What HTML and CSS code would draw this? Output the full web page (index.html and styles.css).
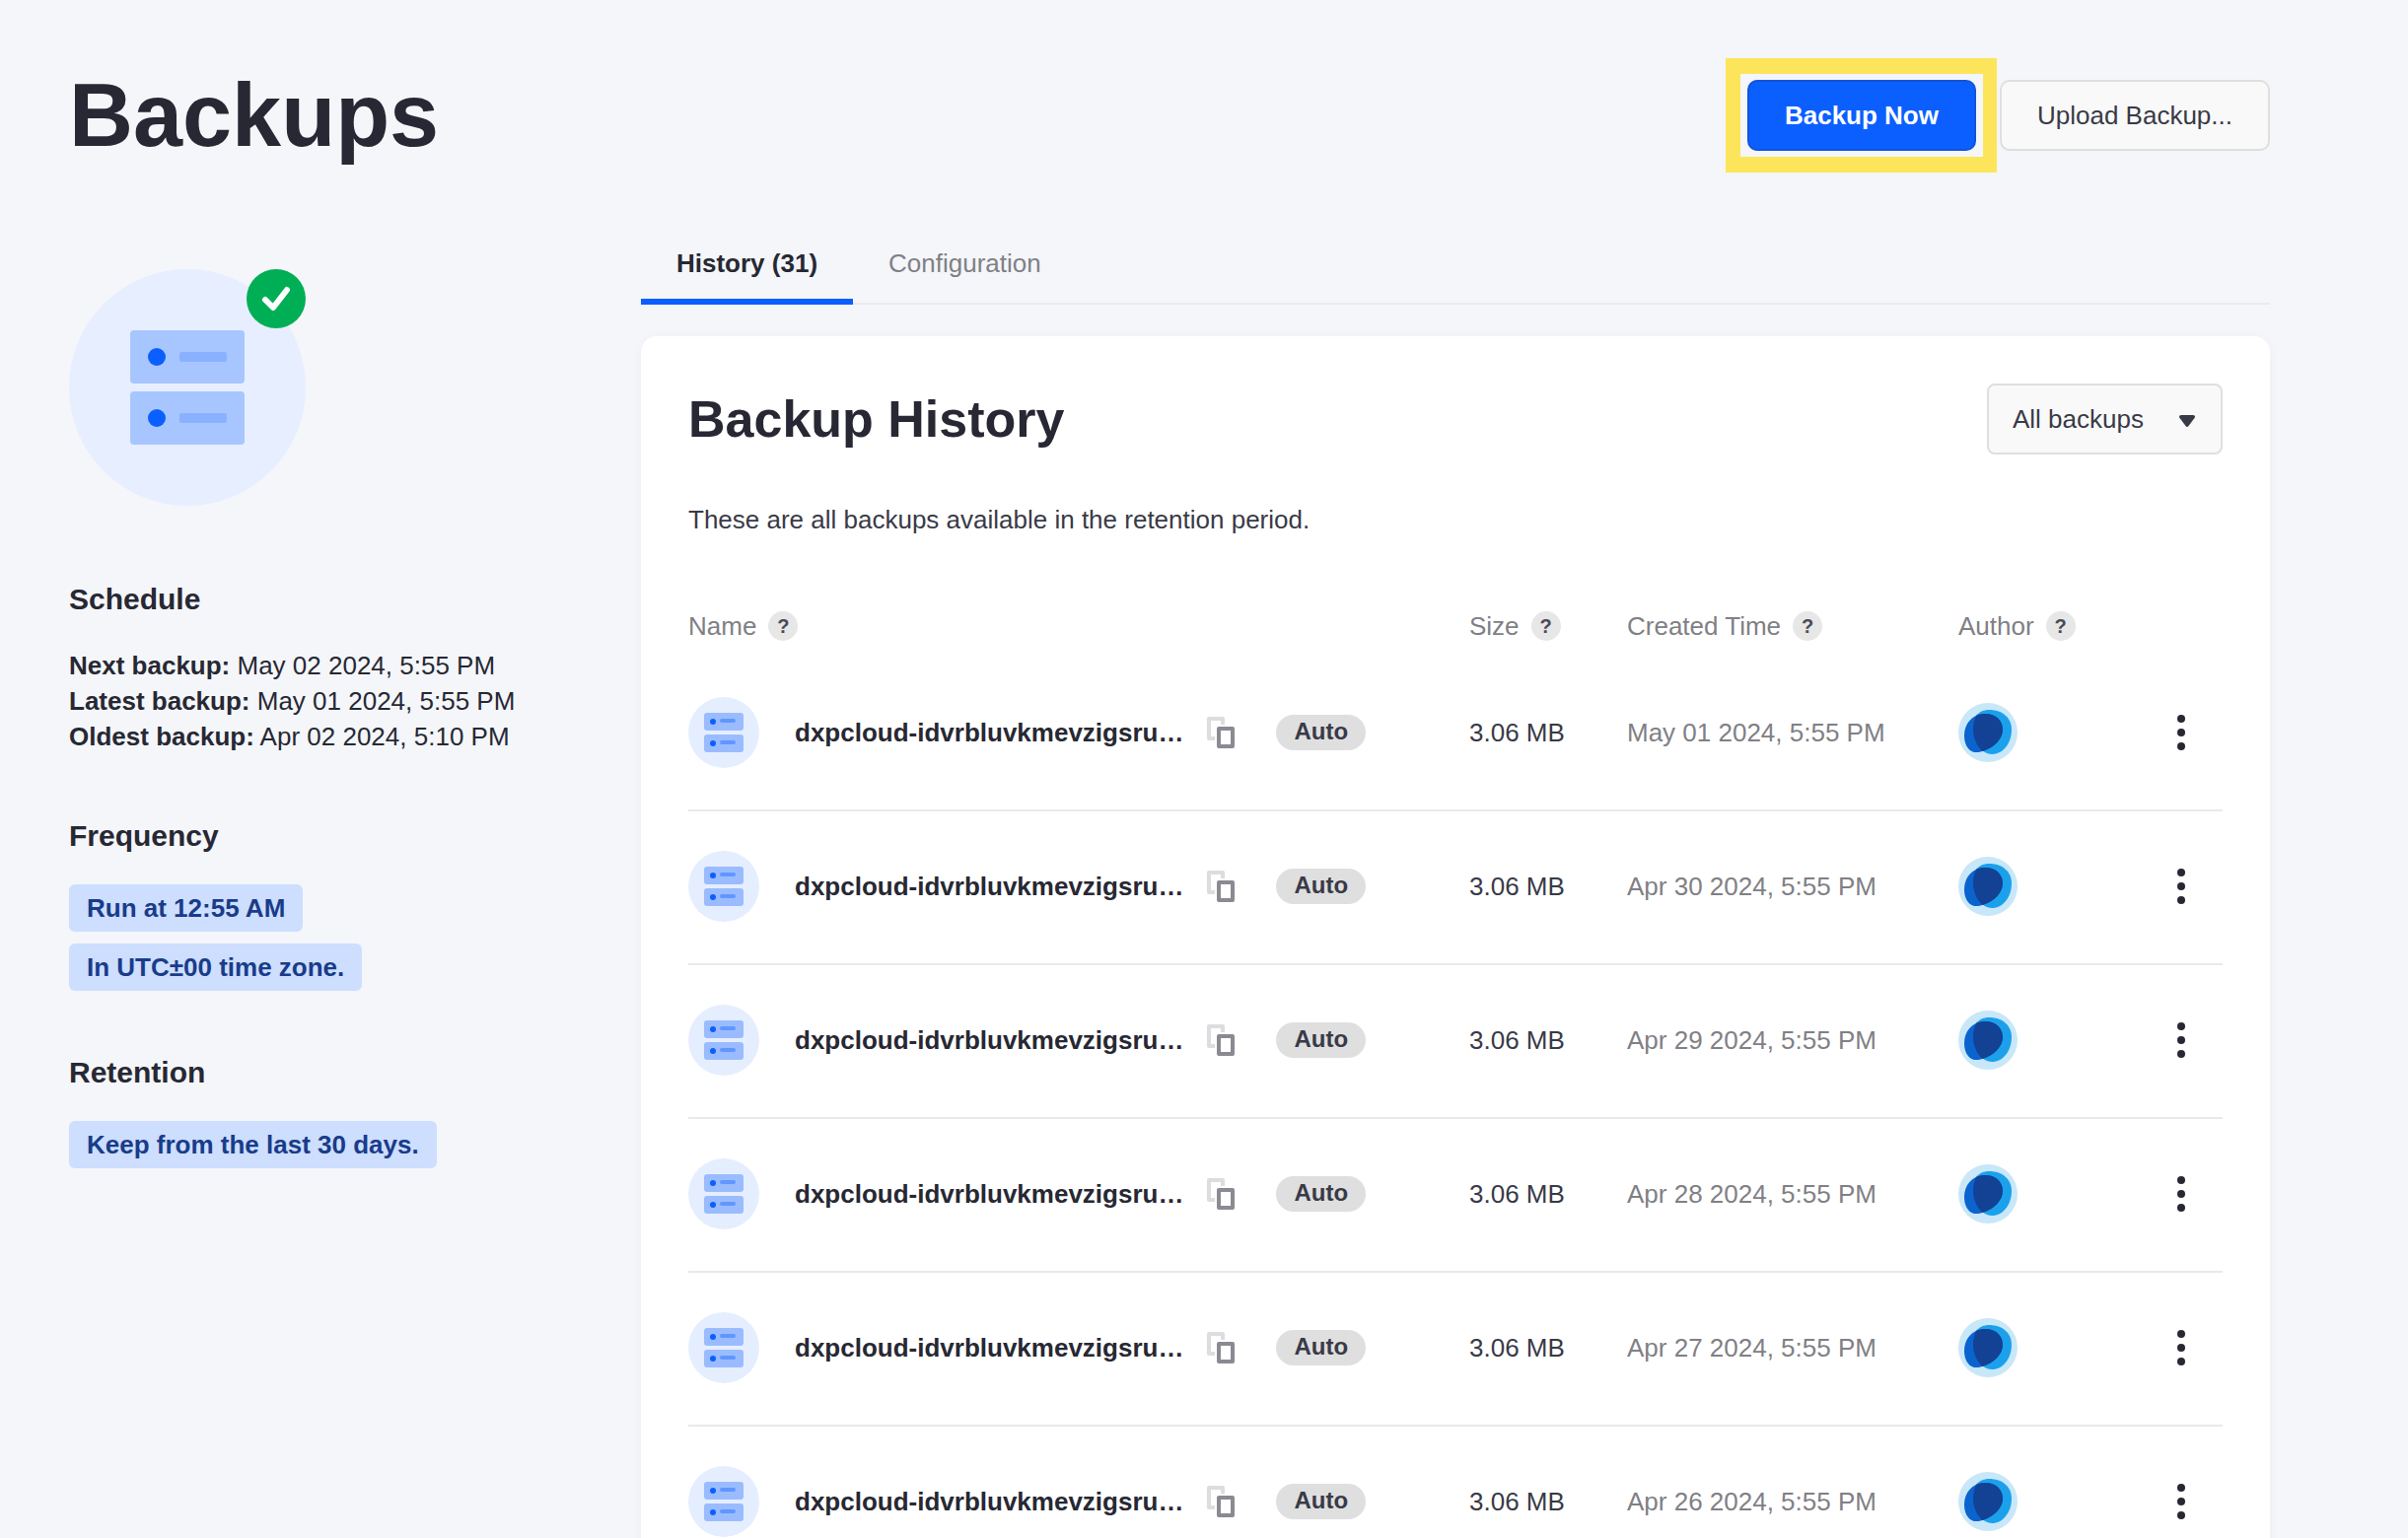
FILE: index.html
```html
<!DOCTYPE html>
<html lang="en">
<head>
<meta charset="utf-8">
<meta name="viewport" content="width=device-width, initial-scale=1">
<title>Backups</title>
<link rel="stylesheet" href="styles.css">
</head>
<body>
<svg class="sprite" aria-hidden="true">
  <symbol id="server" viewBox="0 0 72 72">
    <circle cx="36" cy="36" r="36" fill="#e5eeff"/>
    <rect x="16" y="16" width="40" height="18" rx="3" fill="#9abcff"/>
    <rect x="16" y="38" width="40" height="18" rx="3" fill="#9abcff"/>
    <circle cx="25" cy="25" r="3" fill="#0b5fff"/>
    <circle cx="25" cy="47" r="3" fill="#0b5fff"/>
    <rect x="32" y="22" width="16" height="4" rx="2" fill="#6097ff"/>
    <rect x="32" y="44" width="16" height="4" rx="2" fill="#6097ff"/>
  </symbol>
  <symbol id="copy" viewBox="0 0 28 32">
    <path d="M16 8V2H2v20h6" fill="none" stroke="#dddde0" stroke-width="4" stroke-linejoin="round"/>
    <rect x="12" y="12" width="14" height="18" fill="none" stroke="#8b8a92" stroke-width="4" stroke-linejoin="round"/>
  </symbol>
  <symbol id="avatar" viewBox="0 0 60 60">
    <circle cx="30" cy="30" r="30" fill="#c8e7f9"/>
    <path d="M31 7C45 7 54 15 54 27C54 41 45 52 34 52C24 52 15 40 15 27C15 22 16 17 18 13C21 9 26 7 31 7Z" fill="#1ba1eb"/>
    <path d="M25 11C38 10 45 18 45 27C45 36 37 45 24.500 49C22 50 19 50 16 50C9 48 6 41 6 33C6 21 14 12 25 11Z" fill="#0b63ce"/>
    <path d="M18 13C20 12 22.500 11.300 25 11C38 10 45 18 45 27C45 36 37 45 24.500 49C19 44 15 36 15 27C15 22 16 17 18 13Z" fill="#134194"/>
  </symbol>
  <symbol id="dots" viewBox="0 0 8 36">
    <circle cx="4" cy="4" r="4"/><circle cx="4" cy="18" r="4"/><circle cx="4" cy="32" r="4"/>
  </symbol>
</svg>

<div class="page">
  <header class="page-header">
    <h1 class="page-title">Backups</h1>
    <div class="actions">
      <div class="highlight"><button type="button" class="btn btn-primary">Backup Now</button></div>
      <button type="button" class="btn btn-secondary">Upload Backup...</button>
    </div>
  </header>

  <div class="content">
    <aside class="sidebar">
      <svg class="status" viewBox="0 0 240 240" role="img" aria-label="Backups are running">
        <circle cx="120" cy="120" r="120" fill="#e6eeff"/>
        <rect x="62" y="62" width="116" height="54" rx="4" fill="#a7c6ff"/>
        <rect x="62" y="124" width="116" height="54" rx="4" fill="#a7c6ff"/>
        <circle cx="89" cy="89" r="9" fill="#0b5fff"/>
        <circle cx="89" cy="151" r="9" fill="#0b5fff"/>
        <rect x="112" y="84" width="48" height="10" rx="2" fill="#89b1ff"/>
        <rect x="112" y="146" width="48" height="10" rx="2" fill="#89b1ff"/>
        <circle cx="210" cy="30" r="30" fill="#00af55"/>
        <path d="M199 31l8 8 14-18" fill="none" stroke="#fff" stroke-width="6" stroke-linecap="round" stroke-linejoin="round"/>
      </svg>

      <section class="info">
        <h2 class="info-title">Schedule</h2>
        <ul class="schedule">
          <li><strong>Next backup:</strong> May 02 2024, 5:55 PM</li>
          <li><strong>Latest backup:</strong> May 01 2024, 5:55 PM</li>
          <li><strong>Oldest backup:</strong> Apr 02 2024, 5:10 PM</li>
        </ul>
      </section>
      <section class="info">
        <h2 class="info-title">Frequency</h2>
        <div class="tags">
          <span class="tag">Run at 12:55 AM</span>
          <span class="tag">In UTC±00 time zone.</span>
        </div>
      </section>
      <section class="info">
        <h2 class="info-title">Retention</h2>
        <div class="tags"><span class="tag">Keep from the last 30 days.</span></div>
      </section>
    </aside>

    <main class="main">
      <div class="tabs" role="tablist">
        <button type="button" class="tab tab-active" role="tab" aria-selected="true">History (31)</button>
        <button type="button" class="tab" role="tab" aria-selected="false">Configuration</button>
      </div>

      <section class="card">
        <div class="card-header">
          <h2 class="card-title">Backup History</h2>
          <div class="filter">
            <select class="filter-select" aria-label="Filter backups">
              <option>All backups</option>
            </select>
            <svg class="filter-caret" viewBox="0 0 16 12" aria-hidden="true"><path d="M2 0h12c2 0 2.500 2 1.500 3L9.500 11c-.8 1.300-2.200 1.300-3 0L.5 3C-.5 2 0 0 2 0Z" fill="#393a47"/></svg>
          </div>
        </div>
        <p class="card-text">These are all backups available in the retention period.</p>

        <table class="backups">
          <colgroup><col><col class="col-size"><col class="col-created"><col class="col-author"><col class="col-menu"></colgroup>
          <thead>
            <tr>
              <th scope="col"><span class="label">Name <span class="help">?</span></span></th>
              <th scope="col"><span class="label">Size <span class="help">?</span></span></th>
              <th scope="col"><span class="label">Created Time <span class="help">?</span></span></th>
              <th scope="col"><span class="label">Author <span class="help">?</span></span></th>
              <td></td>
            </tr>
          </thead>
          <tbody>
            <tr>
              <td><div class="name"><svg class="server"><use href="#server"/></svg><strong class="name-text">dxpcloud-idvrbluvkmevzigsru…</strong><button type="button" class="icon-btn copy" aria-label="Copy name"><svg><use href="#copy"/></svg></button><span class="badge">Auto</span></div></td>
              <td>3.06 MB</td>
              <td class="created">May 01 2024, 5:55 PM</td>
              <td><svg class="avatar"><use href="#avatar"/></svg></td>
              <td><button type="button" class="icon-btn menu" aria-label="Actions"><svg><use href="#dots"/></svg></button></td>
            </tr>
            <tr>
              <td><div class="name"><svg class="server"><use href="#server"/></svg><strong class="name-text">dxpcloud-idvrbluvkmevzigsru…</strong><button type="button" class="icon-btn copy" aria-label="Copy name"><svg><use href="#copy"/></svg></button><span class="badge">Auto</span></div></td>
              <td>3.06 MB</td>
              <td class="created">Apr 30 2024, 5:55 PM</td>
              <td><svg class="avatar"><use href="#avatar"/></svg></td>
              <td><button type="button" class="icon-btn menu" aria-label="Actions"><svg><use href="#dots"/></svg></button></td>
            </tr>
            <tr>
              <td><div class="name"><svg class="server"><use href="#server"/></svg><strong class="name-text">dxpcloud-idvrbluvkmevzigsru…</strong><button type="button" class="icon-btn copy" aria-label="Copy name"><svg><use href="#copy"/></svg></button><span class="badge">Auto</span></div></td>
              <td>3.06 MB</td>
              <td class="created">Apr 29 2024, 5:55 PM</td>
              <td><svg class="avatar"><use href="#avatar"/></svg></td>
              <td><button type="button" class="icon-btn menu" aria-label="Actions"><svg><use href="#dots"/></svg></button></td>
            </tr>
            <tr>
              <td><div class="name"><svg class="server"><use href="#server"/></svg><strong class="name-text">dxpcloud-idvrbluvkmevzigsru…</strong><button type="button" class="icon-btn copy" aria-label="Copy name"><svg><use href="#copy"/></svg></button><span class="badge">Auto</span></div></td>
              <td>3.06 MB</td>
              <td class="created">Apr 28 2024, 5:55 PM</td>
              <td><svg class="avatar"><use href="#avatar"/></svg></td>
              <td><button type="button" class="icon-btn menu" aria-label="Actions"><svg><use href="#dots"/></svg></button></td>
            </tr>
            <tr>
              <td><div class="name"><svg class="server"><use href="#server"/></svg><strong class="name-text">dxpcloud-idvrbluvkmevzigsru…</strong><button type="button" class="icon-btn copy" aria-label="Copy name"><svg><use href="#copy"/></svg></button><span class="badge">Auto</span></div></td>
              <td>3.06 MB</td>
              <td class="created">Apr 27 2024, 5:55 PM</td>
              <td><svg class="avatar"><use href="#avatar"/></svg></td>
              <td><button type="button" class="icon-btn menu" aria-label="Actions"><svg><use href="#dots"/></svg></button></td>
            </tr>
            <tr>
              <td><div class="name"><svg class="server"><use href="#server"/></svg><strong class="name-text">dxpcloud-idvrbluvkmevzigsru…</strong><button type="button" class="icon-btn copy" aria-label="Copy name"><svg><use href="#copy"/></svg></button><span class="badge">Auto</span></div></td>
              <td>3.06 MB</td>
              <td class="created">Apr 26 2024, 5:55 PM</td>
              <td><svg class="avatar"><use href="#avatar"/></svg></td>
              <td><button type="button" class="icon-btn menu" aria-label="Actions"><svg><use href="#dots"/></svg></button></td>
            </tr>
          </tbody>
        </table>
      </section>
    </main>
  </div>
</div>
</body>
</html>
```

FILE: styles.css
```css
* {
  box-sizing: border-box;
}

body {
  margin: 0;
  background: #f4f6fa;
  color: #272833;
  font: 26px/36px "Liberation Sans", Arial, sans-serif;
}

h1, h2, p, ul {
  margin: 0;
  padding: 0;
}

button, select {
  font: inherit;
  color: inherit;
  cursor: pointer;
}

svg {
  display: block;
}

.sprite {
  display: none;
}

.page {
  height: 100vh;
  overflow-y: auto;
  scrollbar-width: none;
  padding: 59px 140px 0 70px;
}

/* Header */

.page-header {
  display: flex;
  align-items: center;
  justify-content: space-between;
}

.page-title {
  font-size: 90px;
  line-height: 100px;
}

.actions {
  display: flex;
  align-items: center;
  gap: 3px;
}

.highlight {
  padding: 6px 7px;
  border: solid #fce55a;
  border-width: 16px 14px 16px 15px;
}

.btn {
  display: block;
  padding: 16px 36px;
  border: 2px solid;
  border-radius: 10px;
}

.btn-primary {
  background: #0b5fff;
  border-color: #1254d8;
  color: #fff;
  font-weight: 700;
}

.btn-secondary {
  background: #f9f9f9;
  border-color: #dfdfdf;
  color: #393a47;
}

/* Columns */

.content {
  display: grid;
  grid-template-columns: 580px minmax(0, 1fr);
  margin-top: 56px;
}

.sidebar {
  padding-top: 42px;
}

.status {
  width: 240px;
  height: 240px;
  margin-bottom: 76px;
}

.info {
  margin-bottom: 64px;
}

.info-title {
  margin-bottom: 30px;
  font-size: 30px;
  line-height: 38px;
}

.schedule {
  list-style: none;
}

.tags {
  display: flex;
  flex-direction: column;
  align-items: flex-start;
  gap: 12px;
}

.tag {
  padding: 6px 18px;
  border-radius: 6px;
  background: #cddeff;
  color: #193c8a;
  font-weight: 700;
}

/* Tabs */

.tabs {
  display: flex;
  margin-bottom: 32px;
  box-shadow: inset 0 -2px #e9eaee;
}

.tab {
  padding: 18px 36px;
  border: 0;
  border-bottom: 6px solid transparent;
  background: none;
  color: #808085;
}

.tab-active {
  border-bottom-color: #0b5fff;
  color: #272833;
  font-weight: 700;
}

/* History card */

.card {
  padding: 48px;
  border-radius: 16px;
  background: #fff;
  box-shadow: 0 2px 12px rgba(39, 40, 51, 0.04);
}

.card-header {
  display: flex;
  align-items: center;
  justify-content: space-between;
  margin-bottom: 48px;
}

.card-title {
  font-size: 52px;
  line-height: 60px;
}

.card-text {
  margin-bottom: 72px;
  color: #393a47;
}

.filter {
  position: relative;
}

.filter-select {
  display: block;
  appearance: none;
  width: 239px;
  height: 72px;
  padding: 0 24px;
  border: 2px solid #dfdfdf;
  border-radius: 8px;
  background: #f9f9f9;
  color: #393a47;
}

.filter-caret {
  position: absolute;
  top: 32px;
  right: 28px;
  width: 16px;
  height: 12px;
  pointer-events: none;
}

/* Table */

.backups {
  width: 100%;
  table-layout: fixed;
  border-collapse: separate;
  border-spacing: 0;
}

.col-size {
  width: 160px;
}

.col-created {
  width: 336px;
}

.col-author {
  width: 200px;
}

.col-menu {
  width: 68px;
}

.backups th,
.backups thead td {
  padding: 0 0 14px;
  color: #808085;
  font-weight: 400;
  text-align: left;
}

.label {
  display: flex;
  align-items: center;
  gap: 12px;
}

.help {
  width: 30px;
  border-radius: 50%;
  background: #e7e7e7;
  color: #4b4b58;
  font-size: 20px;
  font-weight: 700;
  line-height: 30px;
  text-align: center;
}

.backups tbody td {
  padding: 40px 0 42px;
  border-bottom: 2px solid #e9e9eb;
  color: #393a47;
  white-space: nowrap;
}

.backups tbody .created {
  color: #808085;
}

.name {
  display: flex;
  align-items: center;
}

.server {
  width: 72px;
  height: 72px;
  margin-right: 36px;
}

.backups .name-text {
  color: #272833;
}

.icon-btn {
  padding: 0;
  border: 0;
  background: none;
}

.copy {
  margin: 0 42px 0 24px;
}

.copy svg {
  width: 28px;
  height: 32px;
}

.badge {
  padding: 0 18px 2px;
  border-radius: 18px;
  background: #dfdfdf;
  color: #393a47;
  font-size: 24px;
  font-weight: 700;
  line-height: 34px;
}

.avatar {
  width: 60px;
  height: 60px;
}

.menu {
  display: block;
  padding: 0 22px;
}

.menu svg {
  width: 8px;
  height: 36px;
  fill: #272833;
}
```
